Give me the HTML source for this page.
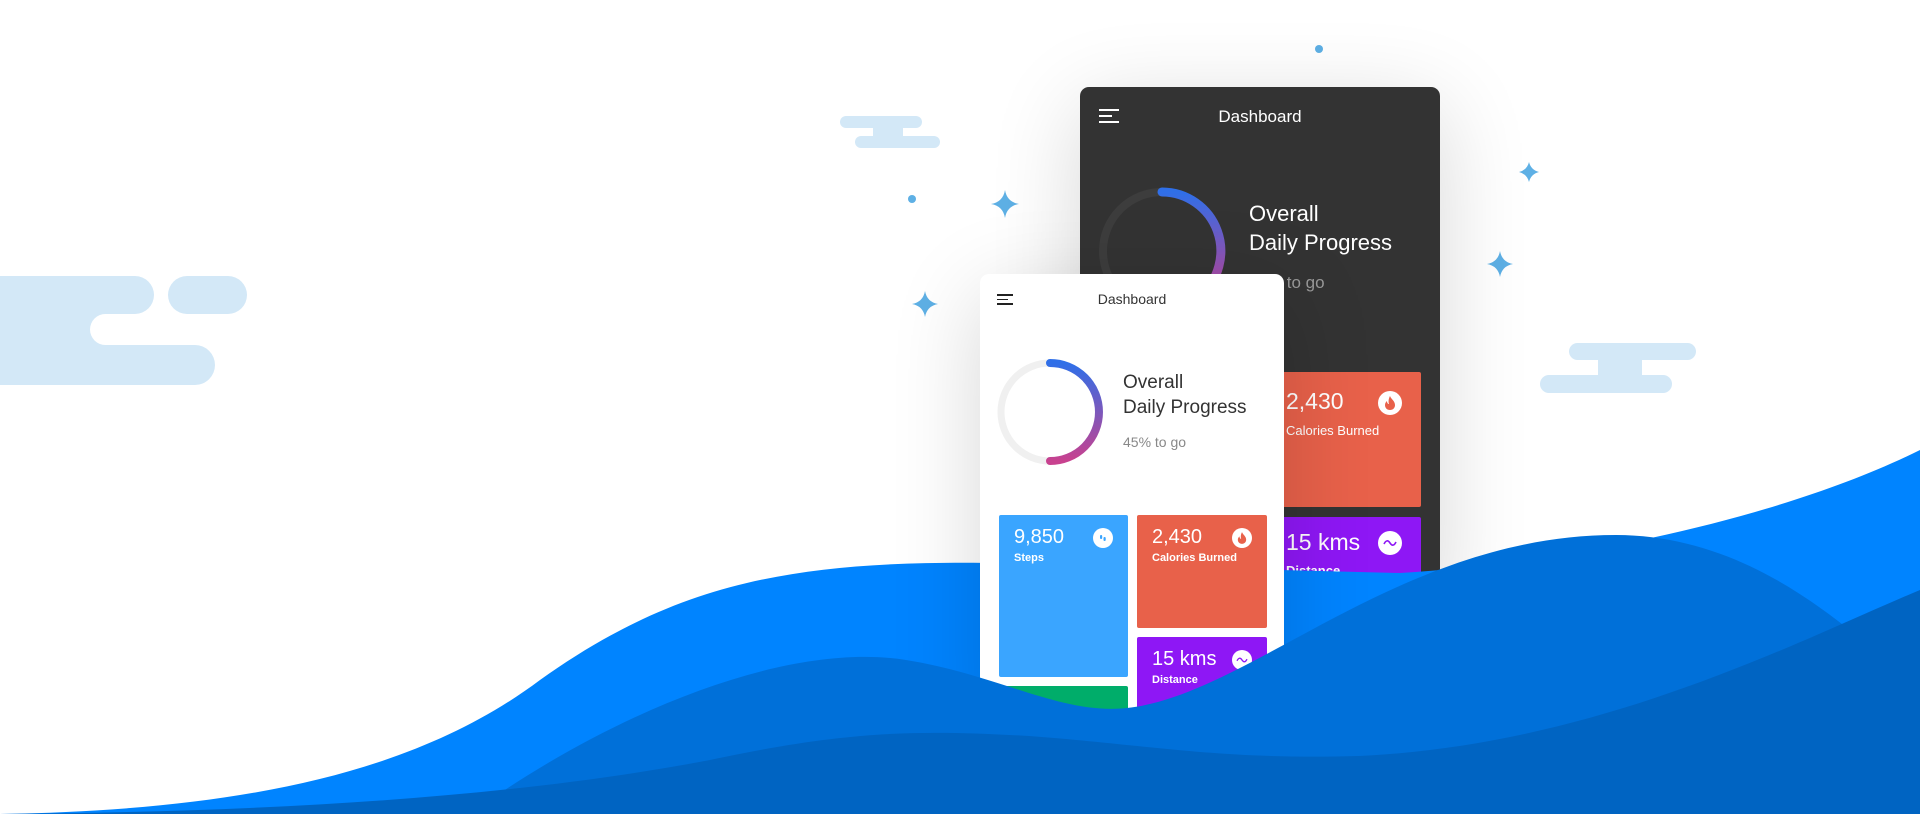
<!DOCTYPE html>
<html><head><meta charset="utf-8"><style>
*{margin:0;padding:0;box-sizing:border-box}
body{width:1920px;height:814px;overflow:hidden;background:#fff;position:relative;font-family:"Liberation Sans",sans-serif}
.abs{position:absolute}
.phone{position:absolute;border-radius:9px;overflow:hidden;box-shadow:0 20px 90px rgba(0,0,0,.16)}
.ham{position:absolute}
.ham i{display:block;height:2px;margin-bottom:4px}
.t{position:absolute;white-space:nowrap}
.card{position:absolute;border-radius:2px;color:#fff}
.num{position:absolute;font-weight:300;white-space:nowrap}
.lab{position:absolute;font-weight:bold;white-space:nowrap}
.ic{position:absolute;border-radius:50%;background:#fff}
.ic svg{position:absolute;left:0;top:0;width:100%;height:100%}
</style></head><body>
<svg class="abs" style="left:0;top:0" width="1920" height="814">
 <g fill="#d3e8f7">
  <rect x="-20" y="276" width="174" height="38" rx="19"/>
  <rect x="168" y="276" width="79" height="38" rx="19"/>
  <rect x="-20" y="345" width="235" height="40" rx="20"/>
  <rect x="0" y="300" width="110" height="60"/>
  <rect x="840" y="116" width="82" height="12" rx="6"/>
  <rect x="855" y="136" width="85" height="12" rx="6"/>
  <rect x="873" y="122" width="30" height="18"/>
  <rect x="1569" y="343" width="127" height="17" rx="8.5"/>
  <rect x="1540" y="375" width="132" height="18" rx="9"/>
  <rect x="1598" y="352" width="44" height="30"/>
 </g>
 <g fill="#fff">
  <rect x="90" y="314" width="140" height="31" rx="15.5"/>
  <rect x="810" y="128" width="63" height="8" rx="4"/>
  <rect x="903" y="128" width="60" height="8" rx="4"/>
  <rect x="1520" y="360" width="78" height="15" rx="7.5"/>
  <rect x="1642" y="360" width="80" height="15" rx="7.5"/>
 </g>
 <g fill="#5eb0e5">
  <circle cx="912" cy="199" r="4"/>
  <circle cx="1319" cy="49" r="4"/>
  <path d="M1005,190 Q1007,202 1019,204 Q1007,206 1005,218 Q1003,206 991,204 Q1003,202 1005,190Z"/>
  <path d="M925,291 Q927,302 938,304 Q927,306 925,317 Q923,306 912,304 Q923,302 925,291Z"/>
  <path d="M1529,162 Q1531,170 1539,172 Q1531,174 1529,182 Q1527,174 1519,172 Q1527,170 1529,162Z"/>
  <path d="M1500,251 Q1502,262 1513,264 Q1502,266 1500,277 Q1498,266 1487,264 Q1498,262 1500,251Z"/>
 </g>
</svg>

<!-- dark phone -->
<div class="phone" style="left:1080px;top:87px;width:360px;height:520px;background:#333">
 <div class="ham" style="left:19px;top:22px"><i style="width:20px;background:#fff"></i><i style="width:13px;background:#fff"></i><i style="width:20px;background:#fff"></i></div>
 <div class="t" style="left:0;width:360px;text-align:center;top:20px;color:#fff;font-size:17px">Dashboard</div>
 <svg class="abs" style="left:0;top:0" width="360" height="300">
  <defs><linearGradient id="g1" x1="0" y1="0" x2="0" y2="1"><stop offset="0" stop-color="#2f6fe8"/><stop offset="1" stop-color="#c0449a"/></linearGradient></defs>
  <circle cx="82" cy="164" r="59" fill="none" stroke="#3d3d3d" stroke-width="8"/>
  <path d="M82,105 A59,59 0 0 1 120,209" fill="none" stroke="url(#g1)" stroke-width="9" stroke-linecap="round"/>
 </svg>
 <div class="t" style="left:169px;top:112px;color:#fff;font-size:22px;line-height:29px">Overall<br>Daily Progress</div>
 <div class="t" style="left:168px;top:186px;color:#999;font-size:17px">45% to go</div>
 <div class="card" style="left:0;top:285px;width:341px;height:135px;background:#e8614a">
  <div class="num" style="left:206px;top:16px;font-size:23px">2,430</div>
  <div class="lab" style="left:206px;top:51px;font-size:13px;font-weight:normal">Calories Burned</div>
  <div class="ic" style="left:298px;top:19px;width:24px;height:24px"><svg viewBox="0 0 24 24"><path d="M12,5 C13,8 17,10 17,14 C17,17 15,19 12,19 C9,19 7,17 7,14 C7,12 8,11 9,10 C9,12 10,13 11,13 C10,10 11,7 12,5Z" fill="#e8614a"/></svg></div>
 </div>
 <div class="card" style="left:0;top:430px;width:341px;height:100px;background:#8e17f5">
  <div class="num" style="left:206px;top:12px;font-size:23px">15 kms</div>
  <div class="lab" style="left:206px;top:46px;font-size:13px">Distance</div>
  <div class="ic" style="left:298px;top:14px;width:24px;height:24px"><svg viewBox="0 0 24 24"><path d="M6,13 C8,9 10,9 12,12 C14,15 16,15 18,11" fill="none" stroke="#8e17f5" stroke-width="1.6"/></svg></div>
 </div>
</div>

<svg class="abs" style="left:0;top:0" width="1920" height="814">
 <path fill="#0084ff" d="M0,814 C250,810 420,770 540,680 C680,580 800,560 1000,563 L1400,573 C1600,560 1800,510 1920,450 L1920,814Z"/>
</svg>

<!-- white phone -->
<div class="phone" style="left:980px;top:274px;width:304px;height:460px;background:#fff">
 <div class="ham" style="left:17px;top:20px"><i style="width:16px;height:1.6px;background:#222;margin-bottom:3px"></i><i style="width:11px;height:1.6px;background:#222;margin-bottom:3px"></i><i style="width:16px;height:1.6px;background:#222"></i></div>
 <div class="t" style="left:0;width:304px;text-align:center;top:17px;color:#333;font-size:14px">Dashboard</div>
 <svg class="abs" style="left:0;top:0" width="304" height="220">
  <defs><linearGradient id="g2" x1="0" y1="0" x2="0" y2="1"><stop offset="0" stop-color="#2f6fe8"/><stop offset="1" stop-color="#c8418f"/></linearGradient></defs>
  <circle cx="70" cy="138" r="49" fill="none" stroke="#f0f0f0" stroke-width="7"/>
  <path d="M70,89 A49,49 0 0 1 70,187" fill="none" stroke="url(#g2)" stroke-width="8" stroke-linecap="round"/>
 </svg>
 <div class="t" style="left:143px;top:96px;color:#333;font-size:19px;line-height:25px">Overall<br>Daily Progress</div>
 <div class="t" style="left:143px;top:160px;color:#888;font-size:14px">45% to go</div>
 <div class="card" style="left:19px;top:241px;width:129px;height:162px;background:#3aa5ff">
  <div class="num" style="left:15px;top:11px;font-size:20px">9,850</div>
  <div class="lab" style="left:15px;top:37px;font-size:11px">Steps</div>
  <div class="ic" style="left:94px;top:13px;width:20px;height:20px"><svg viewBox="0 0 20 20"><rect x="7" y="7" width="2.2" height="4" rx="1" fill="#3aa5ff"/><rect x="10.5" y="9" width="2.2" height="4" rx="1" fill="#3aa5ff"/></svg></div>
 </div>
 <div class="card" style="left:157px;top:241px;width:130px;height:113px;background:#e8614a">
  <div class="num" style="left:15px;top:11px;font-size:20px">2,430</div>
  <div class="lab" style="left:15px;top:37px;font-size:11px">Calories Burned</div>
  <div class="ic" style="left:95px;top:13px;width:20px;height:20px"><svg viewBox="0 0 24 24"><path d="M12,5 C13,8 17,10 17,14 C17,17 15,19 12,19 C9,19 7,17 7,14 C7,12 8,11 9,10 C9,12 10,13 11,13 C10,10 11,7 12,5Z" fill="#e8614a"/></svg></div>
 </div>
 <div class="card" style="left:157px;top:363px;width:130px;height:100px;background:#8e17f5">
  <div class="num" style="left:15px;top:11px;font-size:20px">15 kms</div>
  <div class="lab" style="left:15px;top:37px;font-size:11px">Distance</div>
  <div class="ic" style="left:95px;top:13px;width:20px;height:20px"><svg viewBox="0 0 24 24"><path d="M6,13 C8,9 10,9 12,12 C14,15 16,15 18,11" fill="none" stroke="#8e17f5" stroke-width="1.6"/></svg></div>
 </div>
 <div class="card" style="left:19px;top:412px;width:129px;height:60px;background:#00ad6a"></div>
</div>

<svg class="abs" style="left:0;top:0" width="1920" height="814">
 <path fill="#0070d9" d="M470,814 C600,720 780,640 906,660 C1000,675 1060,715 1127,708 C1250,695 1400,535 1616,535 C1760,535 1860,640 1920,690 L1920,814Z"/>
 <path fill="#0064c2" d="M0,814 C250,812 500,800 710,760 C850,730 920,730 1029,736 C1150,745 1220,760 1359,756 C1600,745 1800,640 1920,590 L1920,814Z"/>
</svg>
</body></html>
